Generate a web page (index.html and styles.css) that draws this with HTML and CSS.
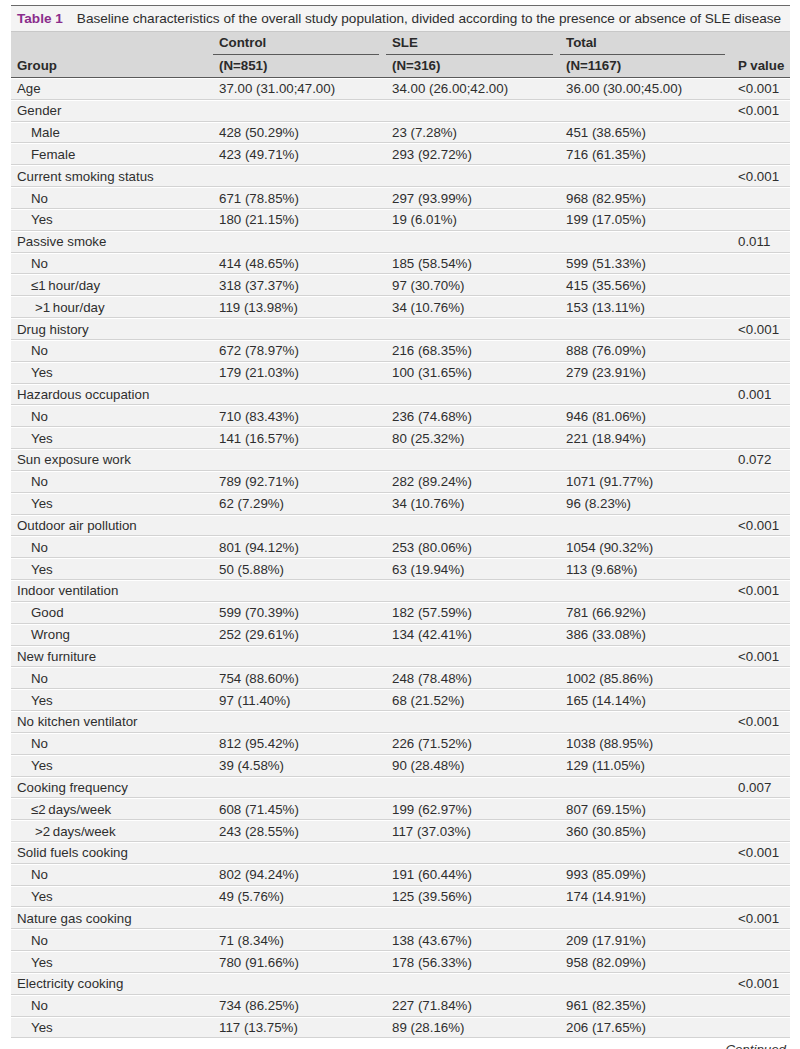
FILE: index.html
```html
<!DOCTYPE html>
<html>
<head>
<meta charset="utf-8">
<link rel="stylesheet" href="styles.css">
</head>
<body>
<div class="tbl">
  <div class="caption"><span class="tnum">Table 1</span><span class="ctext">Baseline characteristics of the overall study population, divided according to the presence or absence of SLE disease</span></div>
  <div class="head">
    <div class="hrow">
      <div class="hc"></div>
      <div class="hc span">Control</div>
      <div class="hc span">SLE</div>
      <div class="hc span">Total</div>
      <div class="hc"></div>
    </div>
    <div class="hrow">
      <div class="hc">Group</div>
      <div class="hc">(N=851)</div>
      <div class="hc">(N=316)</div>
      <div class="hc">(N=1167)</div>
      <div class="hc">P value</div>
    </div>
  </div>
  <div class="body" id="body"></div>
  <div class="cont">Continued</div>
</div>
<script src="app.js"></script>
</body>
</html>
```

FILE: app.js
```js
const rows = [
  ["Age","37.00 (31.00;47.00)","34.00 (26.00;42.00)","36.00 (30.00;45.00)","<0.001",0],
  ["Gender","","","","<0.001",0],
  ["Male","428 (50.29%)","23 (7.28%)","451 (38.65%)","",1],
  ["Female","423 (49.71%)","293 (92.72%)","716 (61.35%)","",1],
  ["Current smoking status","","","","<0.001",0],
  ["No","671 (78.85%)","297 (93.99%)","968 (82.95%)","",1],
  ["Yes","180 (21.15%)","19 (6.01%)","199 (17.05%)","",1],
  ["Passive smoke","","","","0.011",0],
  ["No","414 (48.65%)","185 (58.54%)","599 (51.33%)","",1],
  ["\u22641\u2009hour/day","318 (37.37%)","97 (30.70%)","415 (35.56%)","",1],
  [">1\u2009hour/day","119 (13.98%)","34 (10.76%)","153 (13.11%)","",2],
  ["Drug history","","","","<0.001",0],
  ["No","672 (78.97%)","216 (68.35%)","888 (76.09%)","",1],
  ["Yes","179 (21.03%)","100 (31.65%)","279 (23.91%)","",1],
  ["Hazardous occupation","","","","0.001",0],
  ["No","710 (83.43%)","236 (74.68%)","946 (81.06%)","",1],
  ["Yes","141 (16.57%)","80 (25.32%)","221 (18.94%)","",1],
  ["Sun exposure work","","","","0.072",0],
  ["No","789 (92.71%)","282 (89.24%)","1071 (91.77%)","",1],
  ["Yes","62 (7.29%)","34 (10.76%)","96 (8.23%)","",1],
  ["Outdoor air pollution","","","","<0.001",0],
  ["No","801 (94.12%)","253 (80.06%)","1054 (90.32%)","",1],
  ["Yes","50 (5.88%)","63 (19.94%)","113 (9.68%)","",1],
  ["Indoor ventilation","","","","<0.001",0],
  ["Good","599 (70.39%)","182 (57.59%)","781 (66.92%)","",1],
  ["Wrong","252 (29.61%)","134 (42.41%)","386 (33.08%)","",1],
  ["New furniture","","","","<0.001",0],
  ["No","754 (88.60%)","248 (78.48%)","1002 (85.86%)","",1],
  ["Yes","97 (11.40%)","68 (21.52%)","165 (14.14%)","",1],
  ["No kitchen ventilator","","","","<0.001",0],
  ["No","812 (95.42%)","226 (71.52%)","1038 (88.95%)","",1],
  ["Yes","39 (4.58%)","90 (28.48%)","129 (11.05%)","",1],
  ["Cooking frequency","","","","0.007",0],
  ["\u22642\u2009days/week","608 (71.45%)","199 (62.97%)","807 (69.15%)","",1],
  [">2\u2009days/week","243 (28.55%)","117 (37.03%)","360 (30.85%)","",2],
  ["Solid fuels cooking","","","","<0.001",0],
  ["No","802 (94.24%)","191 (60.44%)","993 (85.09%)","",1],
  ["Yes","49 (5.76%)","125 (39.56%)","174 (14.91%)","",1],
  ["Nature gas cooking","","","","<0.001",0],
  ["No","71 (8.34%)","138 (43.67%)","209 (17.91%)","",1],
  ["Yes","780 (91.66%)","178 (56.33%)","958 (82.09%)","",1],
  ["Electricity cooking","","","","<0.001",0],
  ["No","734 (86.25%)","227 (71.84%)","961 (82.35%)","",1],
  ["Yes","117 (13.75%)","89 (28.16%)","206 (17.65%)","",1]
];
const body = document.getElementById("body");
for (const r of rows) {
  const row = document.createElement("div");
  row.className = "row";
  for (let i = 0; i < 5; i++) {
    const c = document.createElement("div");
    c.className = "c";
    if (i === 0 && r[5] === 1) c.className += " ind1";
    if (i === 0 && r[5] === 2) c.className += " ind2";
    c.textContent = r[i];
    row.appendChild(c);
  }
  body.appendChild(row);
}
```

FILE: styles.css
```css
html, body {
  margin: 0;
  padding: 0;
  background: #fff;
}
body {
  font-family: "Liberation Sans", Arial, sans-serif;
  font-size: 13.3px;
  color: #2e2e2e;
  padding: 5px 10px 0 11px;
}
.tbl {
  width: 779px;
}
.caption {
  border-top: 1px solid #6a6a6a;
  background: #f4f4f4;
  height: 25px;
  display: flex;
  align-items: center;
  padding-left: 6px;
  white-space: nowrap;
  overflow: hidden;
  font-size: 13.6px;
}
.tnum {
  color: #8a2d8c;
  font-weight: bold;
  margin-right: 14px;
}
.ctext {
  color: #2e2e2e;
}
.head {
  background: #d8d8d8;
  border-top: 1px solid #c8c8c8;
  border-bottom: 1px solid #5a5a5a;
  font-weight: bold;
  color: #2a2a2a;
}
.hrow, .row {
  display: grid;
  grid-template-columns: 202px 173px 174px 172px 58px;
}
.hrow {
  height: 22.5px;
}
.hc {
  padding-left: 6px;
  display: flex;
  align-items: center;
  white-space: nowrap;
}
.hc.span {
  margin-right: 7px;
  border-bottom: 1px solid #5a5a5a;
}
.row {
  height: 21.84px;
  box-sizing: border-box;
  background: #f2f2f2;
  border-bottom: 1px solid #d3d3d3;
  border-top: 1px solid #fff;
}
.c {
  padding-left: 6px;
  display: flex;
  align-items: center;
  white-space: nowrap;
}
.c.ind1 {
  padding-left: 20px;
}
.c.ind2 {
  padding-left: 24px;
}
.cont {
  text-align: right;
  font-style: italic;
  padding-top: 4px;
  padding-right: 4px;
  color: #333;
}
```
